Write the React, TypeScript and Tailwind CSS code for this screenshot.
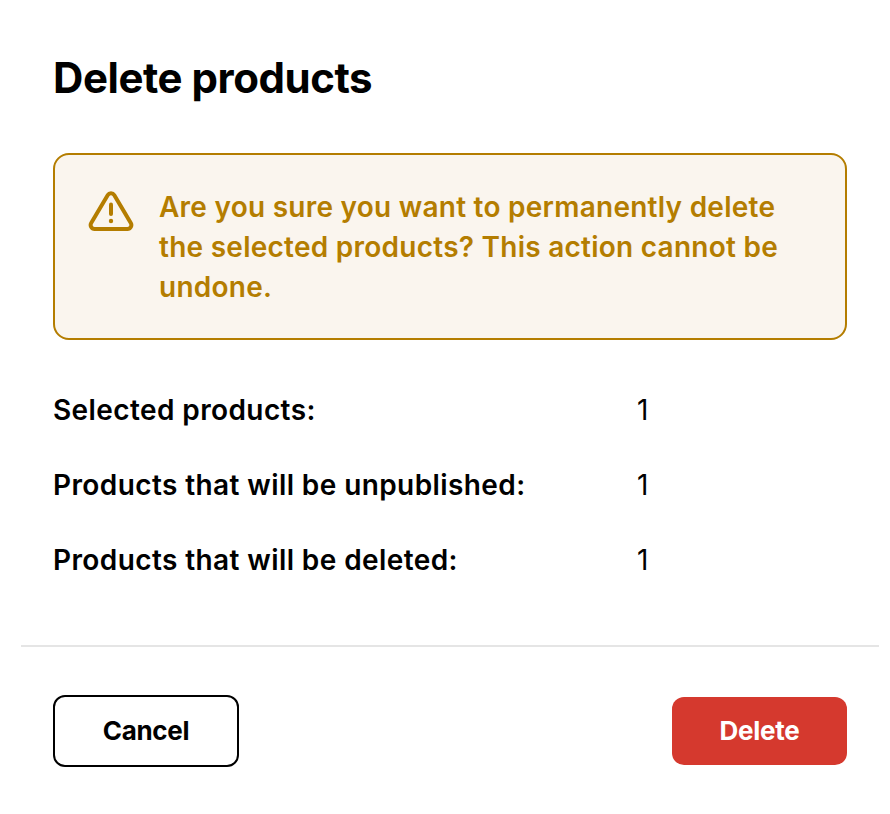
const rows = [
  { label: "Selected products:", value: 1 },
  { label: "Products that will be unpublished:", value: 1 },
  { label: "Products that will be deleted:", value: 1 },
]

function WarningIcon() {
  return (
    <svg viewBox="0 0 46 40" fill="none" stroke="currentColor" className="w-[46px] h-[40px] mt-[4px] flex-shrink-0 text-[#b47d00]">
      <path
        d="M19.8 4 L3.2 32 a4 4 0 0 0 3.4 6 h32.8 a4 4 0 0 0 3.4-6 L26.2 4 a3.7 3.7 0 0 0 -6.4 0 Z"
        strokeWidth={4}
        strokeLinejoin="round"
      />
      <path d="M23 13.5 V23" strokeWidth={4} strokeLinecap="round" />
      <circle cx="23" cy="30" r="2.2" fill="currentColor" stroke="none" />
    </svg>
  )
}

export default function App() {
  return (
    <div className="w-[890px] h-[814px] bg-white text-black font-['Inter',sans-serif] overflow-hidden">
      <div className="pl-[53px] pr-[43px] pt-[52px]">
        <h2 className="text-[42px] leading-[52px] font-bold tracking-[-0.45px]">Delete products</h2>
        <div className="mt-[49px] h-[187px] border-2 border-[#b47d00] rounded-[16px] bg-[#faf5ee] flex gap-[25px] pl-[33px] pr-[40px] pt-[32px]">
          <WarningIcon />
          <p className="text-[28px] leading-[40px] font-semibold tracking-[0.25px] text-[#b47d00]">
            Are you sure you want to permanently delete the selected products? This action cannot be undone.
          </p>
        </div>
        <div className="mt-[50px] flex flex-col gap-[35px]">
          {rows.map((r) => (
            <div key={r.label} className="flex text-[28px] leading-[40px]">
              <span className="w-[584px] font-semibold tracking-[0.4px]">{r.label}</span>
              <span>{r.value}</span>
            </div>
          ))}
        </div>
      </div>
      <div className="ml-[21px] mr-[11px] mt-[65px] border-t-2 border-[#e5e5e5]" />
      <div className="pl-[53px] pr-[43px] pt-[48px] flex items-center justify-between">
        <button className="w-[186px] h-[72px] pb-[2px] border-2 border-black rounded-[12px] text-[26px] font-bold tracking-[-0.3px]">Cancel</button>
        <button className="w-[175px] h-[68px] pb-[2px] bg-[#d5392e] text-white rounded-[12px] text-[26px] font-bold tracking-[-0.3px]">Delete</button>
      </div>
    </div>
  )
}
